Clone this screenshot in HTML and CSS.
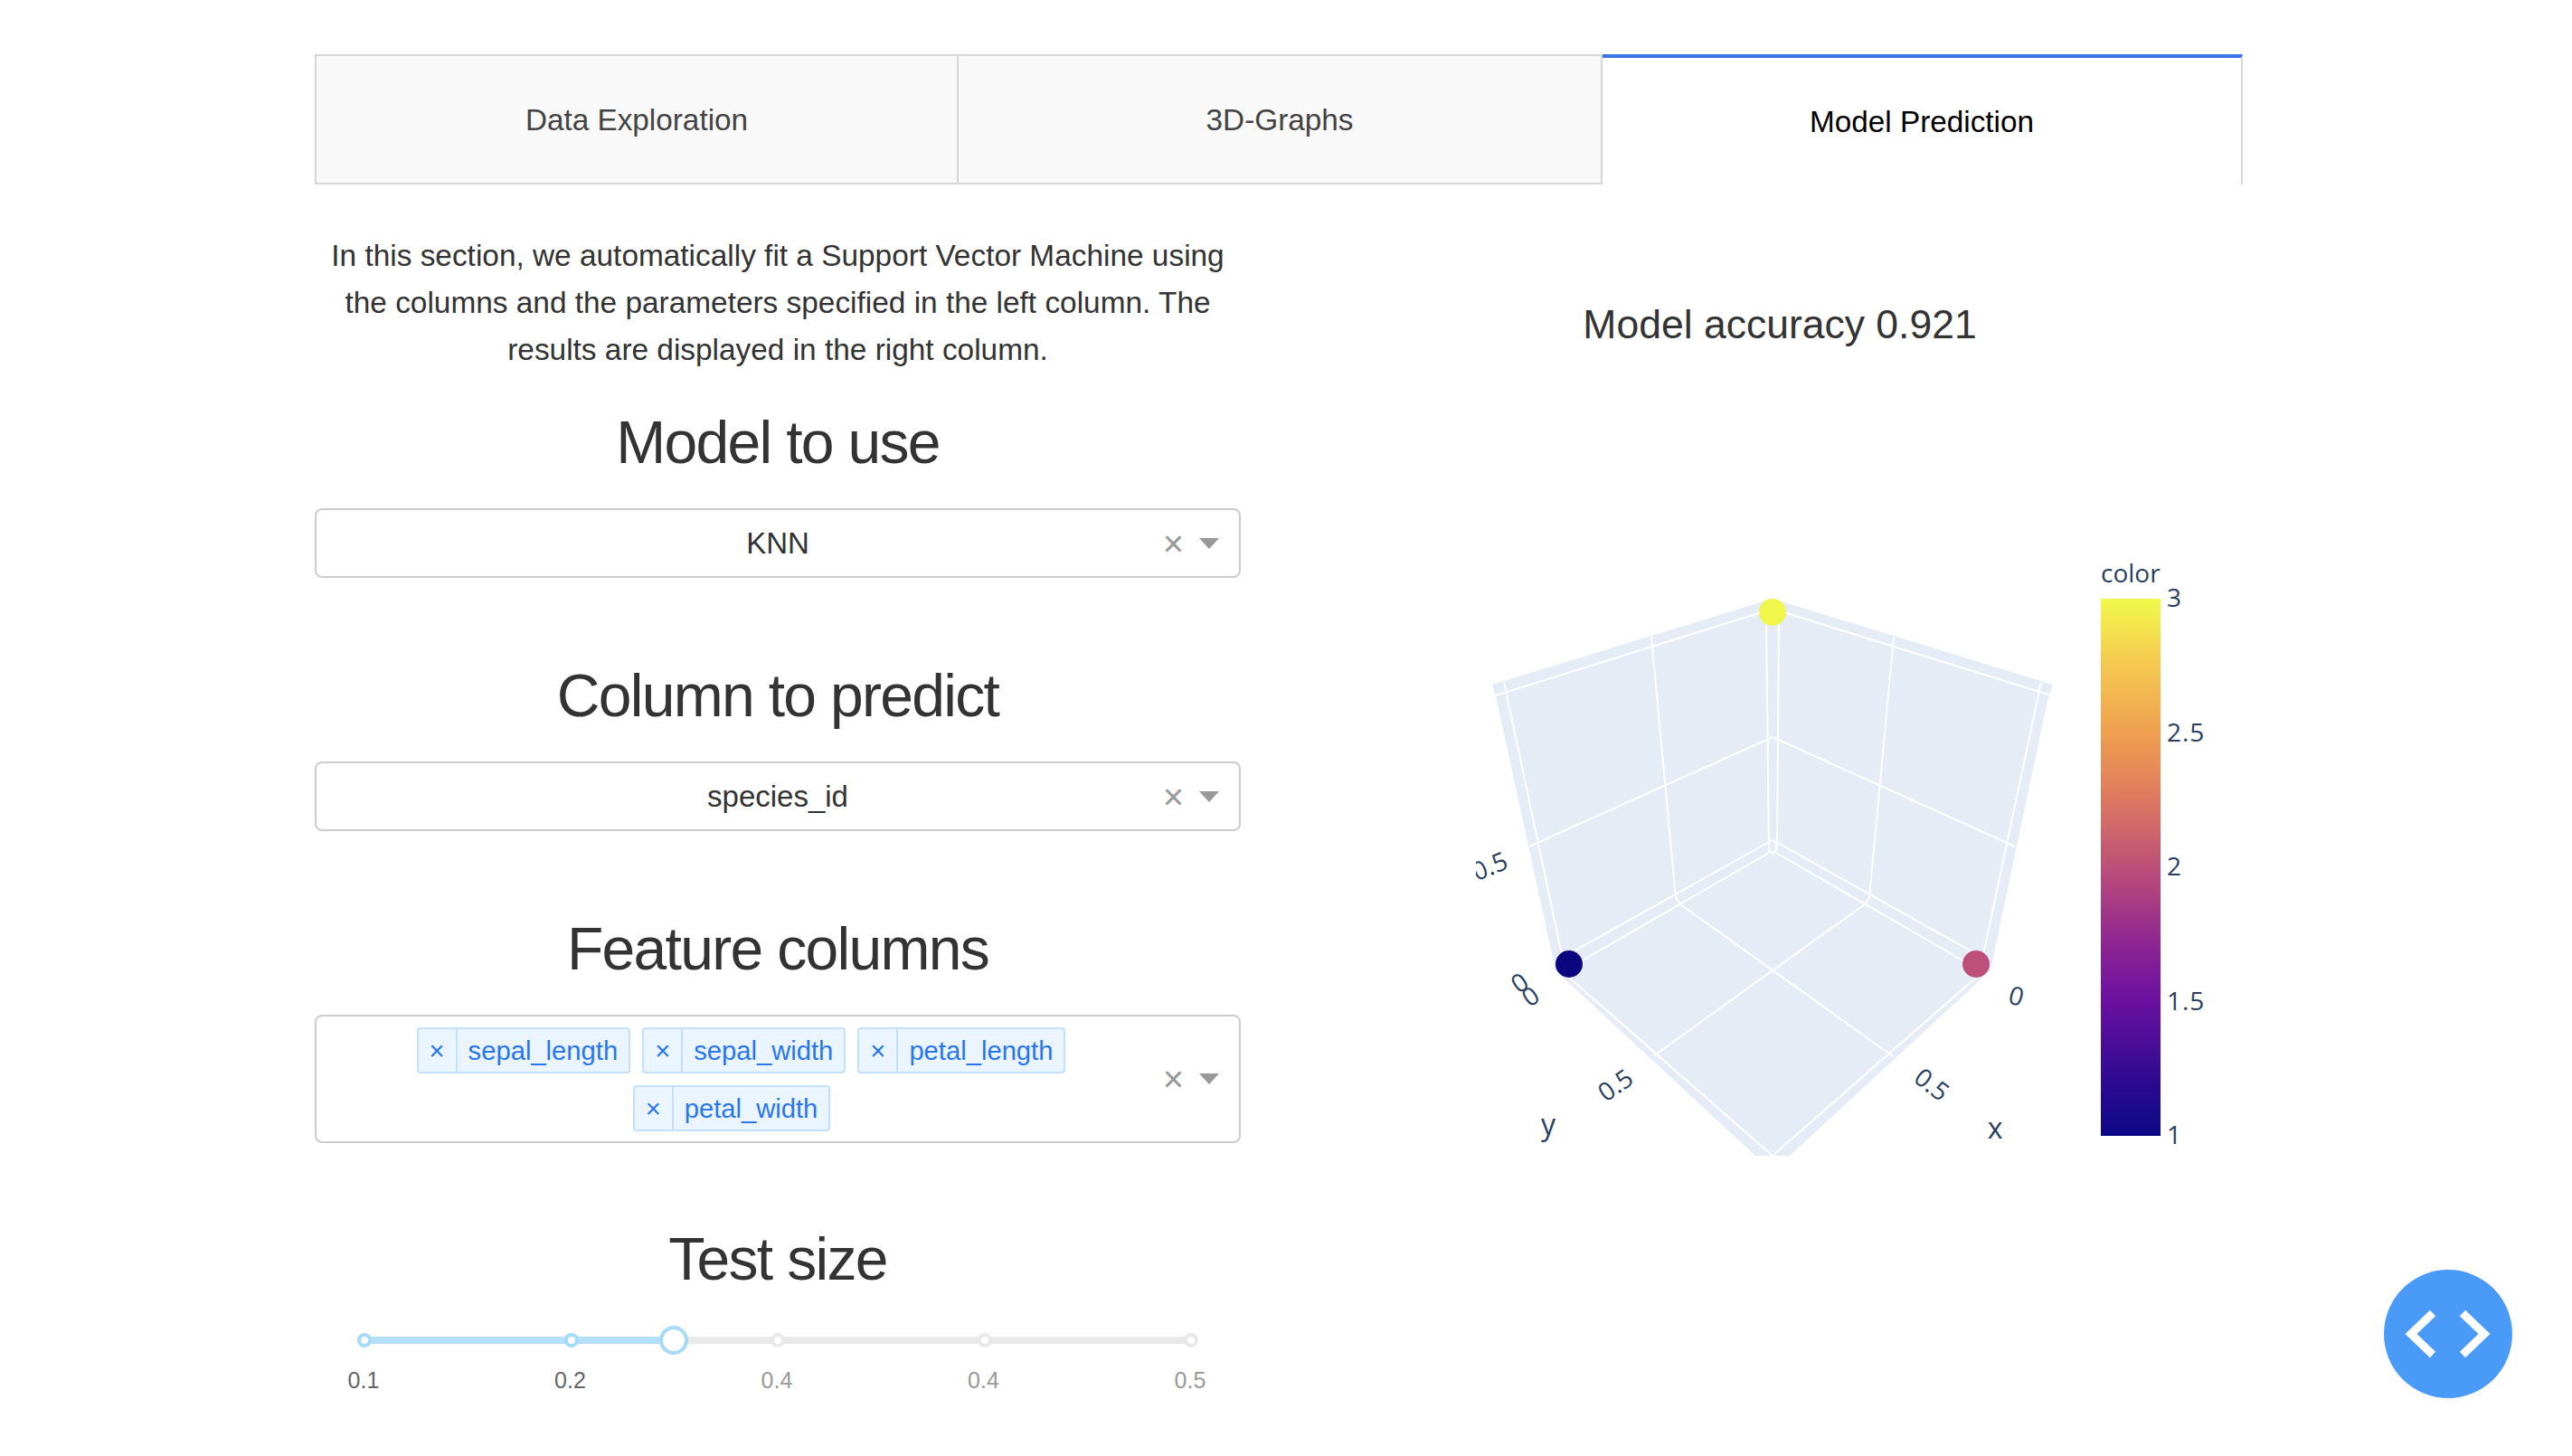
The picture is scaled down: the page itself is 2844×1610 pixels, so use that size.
FILE: index.html
```html
<!DOCTYPE html>
<html lang="en">
<head>
    <meta charset="UTF-8">
    <title>Model Prediction</title>
    <link rel="stylesheet" href="styles.css">
</head>
<body>
    <div class="container">
        <div class="tabs">
            <div class="tab">Data Exploration</div>
            <div class="tab">3D-Graphs</div>
            <div class="tab tab-selected">Model Prediction</div>
        </div>

        <div class="columns">
            <div class="left-column">
                <p class="intro">In this section, we automatically fit a Support Vector Machine using the columns and the parameters specified in the left column. The results are displayed in the right column.</p>

                <h3>Model to use</h3>
                <div class="select">
                    <span class="select-value">KNN</span>
                    <span class="select-icons"><span class="clear">×</span><span class="arrow"></span></span>
                </div>

                <h3>Column to predict</h3>
                <div class="select">
                    <span class="select-value">species_id</span>
                    <span class="select-icons"><span class="clear">×</span><span class="arrow"></span></span>
                </div>

                <h3>Feature columns</h3>
                <div class="select select-multi">
                    <div class="tag-list">
                        <span class="tag"><span class="tag-remove">×</span><span class="tag-label">sepal_length</span></span>
                        <span class="tag"><span class="tag-remove">×</span><span class="tag-label">sepal_width</span></span>
                        <span class="tag"><span class="tag-remove">×</span><span class="tag-label">petal_length</span></span>
                        <span class="tag tag-last"><span class="tag-remove">×</span><span class="tag-label">petal_width</span></span>
                    </div>
                    <span class="select-icons"><span class="clear">×</span><span class="arrow"></span></span>
                </div>

                <h3>Test size</h3>
                <div class="slider">
                    <div class="slider-rail"></div>
                    <div class="slider-track" style="width: 37.4%"></div>
                    <span class="slider-dot dot-active" style="left: 0%"></span>
                    <span class="slider-dot dot-active" style="left: 25%"></span>
                    <span class="slider-dot" style="left: 50%"></span>
                    <span class="slider-dot" style="left: 75%"></span>
                    <span class="slider-dot" style="left: 100%"></span>
                    <span class="slider-handle" style="left: 37.4%"></span>
                    <span class="slider-mark mark-active" style="left: 0%">0.1</span>
                    <span class="slider-mark mark-active" style="left: 25%">0.2</span>
                    <span class="slider-mark" style="left: 50%">0.4</span>
                    <span class="slider-mark" style="left: 75%">0.4</span>
                    <span class="slider-mark" style="left: 100%">0.5</span>
                </div>
            </div>

            <div class="right-column">
                <h4 class="accuracy">Model accuracy 0.921</h4>
                <svg class="plot" viewBox="1456 600 1024 678" width="1024" height="678">
                    <defs>
                        <linearGradient id="plasma" x1="0" y1="1" x2="0" y2="0">
                            <stop offset="0" stop-color="#0d0887"/>
                            <stop offset="0.1" stop-color="#2c0a90"/>
                            <stop offset="0.25" stop-color="#6a10a0"/>
                            <stop offset="0.35" stop-color="#8c2394"/>
                            <stop offset="0.5" stop-color="#bc4f78"/>
                            <stop offset="0.64" stop-color="#df7d5d"/>
                            <stop offset="0.75" stop-color="#ee9f4f"/>
                            <stop offset="0.9" stop-color="#f6d050"/>
                            <stop offset="1" stop-color="#f0f94a"/>
                        </linearGradient>
                        <clipPath id="tick-clip"><rect x="1632" y="900" width="100" height="100"/></clipPath>
                    </defs>

                    <!-- walls and floor -->
                    <polygon class="pane" points="1960,662 2270,757 2264,775 2201,1073 1979,1278 1941,1278 1720,1073 1654,770 1650,757"/>

                    <!-- top edges -->
                    <path class="grid" d="M1654,769 L1948,677 M1972,677 L2268,769"/>
                    <!-- wall grid -->
                    <path class="grid" d="M1663,754 L1727,1056 M1826,704 L1853,993 M1953,683 L1956,939 M1967,685 L1965,939 M2094,704 L2067,993 M2257,754 L2193,1056"/>
                    <path class="grid" d="M1691,936 L1960,815 L2228,936"/>
                    <!-- floor edges -->
                    <path class="grid" d="M1740,1052 L1956,931 M1748,1063 L1956,943 M1964,931 L2180,1052 M1964,943 L2172,1063"/>
                    <path class="grid" d="M1956,931 L1960,929 L1964,932 L1964,940 L1960,944 L1956,940 Z"/>
                    <path class="grid" d="M1853,993 L1858,1000 M2067,993 L2062,1000"/>
                    <!-- floor grid -->
                    <path class="grid" d="M1858,1000 L2093,1168 M2062,1000 L1828,1168"/>
                    <path class="grid" d="M1734,1080 L1960,1278 M2186,1080 L1960,1278"/>

                    <!-- points -->
                    <circle cx="1960" cy="677" r="15" fill="#f0f74a"/>
                    <circle cx="1735" cy="1066" r="15" fill="#0a0680"/>
                    <circle cx="2185" cy="1066" r="15" fill="#bc5078"/>

                    <!-- axis ticks -->
                    <g clip-path="url(#tick-clip)">
                        <text class="plot-text" transform="translate(1651,967) rotate(-22)" text-anchor="middle">0.5</text>
                    </g>
                    <text class="plot-text" transform="translate(1686,1095) rotate(-35)" text-anchor="middle">0</text>
                    <text class="plot-text" transform="translate(1698,1110) rotate(-35)" text-anchor="middle">0</text>
                    <text class="plot-text" transform="translate(2227,1111) rotate(15)" text-anchor="middle">0</text>
                    <text class="plot-text" transform="translate(1792,1208) rotate(-35)" text-anchor="middle">0.5</text>
                    <text class="plot-text" transform="translate(2130,1207) rotate(38)" text-anchor="middle">0.5</text>
                    <text class="axis-title" x="2206" y="1259" text-anchor="middle">x</text>
                    <text class="axis-title" x="1712" y="1255" text-anchor="middle">y</text>

                    <!-- colorbar -->
                    <rect x="2323" y="662" width="66" height="594" fill="url(#plasma)"/>
                    <text class="plot-text" x="2323" y="644">color</text>
                    <text class="plot-text colorbar-tick" x="2396" y="671">3</text>
                    <text class="plot-text colorbar-tick" x="2396" y="820">2.5</text>
                    <text class="plot-text colorbar-tick" x="2396" y="968">2</text>
                    <text class="plot-text colorbar-tick" x="2396" y="1117">1.5</text>
                    <text class="plot-text colorbar-tick" x="2396" y="1265">1</text>
                </svg>
            </div>
        </div>
    </div>

    <button class="debug-button">
        <svg viewBox="0 0 142 142" width="142" height="142">
            <path d="M54,48 L30,71 L54,94" class="code-icon"/>
            <path d="M87,48 L111,71 L87,94" class="code-icon"/>
        </svg>
    </button>
</body>
</html>
```

FILE: styles.css
```css
/* Global Styles */
body {
    font-family: "Liberation Sans", Arial, sans-serif;
    font-size: 33px;
    color: #333;
    margin: 0;
    background-color: #fff;
    height: 1610px;
    overflow: hidden;
    position: relative;
}

.container {
    width: 2132px;
    margin-left: 348px;
    padding-top: 60px;
}

/* Tabs */
.tabs {
    display: grid;
    grid-template-columns: 712px 712px 708px;
    height: 144px;
}

.tab {
    display: flex;
    align-items: center;
    justify-content: center;
    box-sizing: border-box;
    padding-top: 2px;
    background-color: #f9f9f9;
    border: 2px solid #d6d6d6;
    border-left: none;
    font-size: 33.3px;
    color: #444;
}

.tab:first-child {
    border-left: 2px solid #d6d6d6;
}

.tab-selected {
    background-color: #fff;
    border-top: 4px solid #3b73e8;
    border-bottom: none;
    color: #000;
}

/* Columns */
.columns {
    display: grid;
    grid-template-columns: 1024px 1024px;
    column-gap: 84px;
}

.intro {
    margin: 53px 0 37px;
    font-size: 33.4px;
    line-height: 52px;
    text-align: center;
    color: #333;
}

h3 {
    font-size: 66px;
    font-weight: 400;
    letter-spacing: -1.7px;
    line-height: 78px;
    text-align: center;
    margin: 0 0 34px;
}

/* Dropdowns */
.select {
    position: relative;
    display: flex;
    align-items: center;
    justify-content: center;
    box-sizing: border-box;
    height: 77px;
    border: 2px solid #ccc;
    border-radius: 8px;
    margin-bottom: 91px;
}

.select-multi {
    height: 142px;
    justify-content: flex-start;
    margin-bottom: 89px;
}

.select-icons {
    position: absolute;
    top: 0;
    bottom: 0;
    right: 22px;
    display: flex;
    align-items: center;
    gap: 17px;
}

.clear {
    font-size: 40px;
    line-height: 1;
    color: #999;
}

.arrow {
    width: 0;
    height: 0;
    border-style: solid;
    border-width: 12px 11px 0;
    border-color: #999 transparent transparent;
}

/* Tags */
.tag-list {
    width: 939px;
    display: flex;
    flex-wrap: wrap;
    justify-content: center;
    gap: 13px 13px;
}

.tag {
    display: flex;
    box-sizing: border-box;
    height: 51px;
    line-height: 49px;
    font-size: 29.2px;
    color: #2a75f0;
    background-color: #ebf5ff;
    border: 2px solid #c2e0ff;
    border-radius: 4px;
}

.tag-last {
    margin-right: 21px;
}

.tag-remove {
    padding: 0 12px;
    border-right: 2px solid #c2e0ff;
}

.tag-label {
    padding: 0 12px;
}

/* Slider */
.slider {
    position: relative;
    width: 914px;
    height: 8px;
    margin: 0 55px;
    top: 13px;
}

.slider-rail,
.slider-track {
    position: absolute;
    top: 0;
    left: 0;
    height: 8px;
    border-radius: 4px;
}

.slider-rail {
    width: 100%;
    background-color: #e9e9e9;
}

.slider-track {
    background-color: #b4e0f9;
}

.slider-dot {
    position: absolute;
    top: -4px;
    box-sizing: border-box;
    width: 16px;
    height: 16px;
    margin-left: -8px;
    background-color: #fff;
    border: 4px solid #e9e9e9;
    border-radius: 50%;
}

.dot-active {
    border-color: #a5daf8;
}

.slider-handle {
    position: absolute;
    top: -12px;
    box-sizing: border-box;
    width: 32px;
    height: 32px;
    margin-left: -16px;
    background-color: #fff;
    border: 4px solid #a5daf8;
    border-radius: 50%;
}

.slider-mark {
    position: absolute;
    top: 33px;
    width: 60px;
    margin-left: -31px;
    font-size: 25px;
    line-height: 30px;
    text-align: center;
    color: #999;
}

.mark-active {
    color: #666;
}

/* Right column */
.accuracy {
    font-size: 44.5px;
    font-weight: 400;
    line-height: 60px;
    text-align: center;
    margin: 125px 0 0;
}

.plot {
    display: block;
    margin-top: 211px;
}

.pane {
    fill: #e5ecf6;
}

.grid {
    fill: none;
    stroke: #fff;
    stroke-width: 2;
}

.plot-text {
    font-family: "Open Sans", sans-serif;
    font-size: 28px;
    fill: #2a3f5f;
}

.colorbar-tick {
    letter-spacing: 1px;
}

.axis-title {
    font-family: "Open Sans", sans-serif;
    font-size: 32px;
    fill: #2a3f5f;
}

/* Floating button */
.debug-button {
    position: absolute;
    right: 66px;
    bottom: 64px;
    width: 142px;
    height: 142px;
    padding: 0;
    border: none;
    border-radius: 50%;
    background-color: #4a9bf8;
}

.debug-button svg {
    display: block;
}

.code-icon {
    fill: none;
    stroke: #fff;
    stroke-width: 9;
}
```
